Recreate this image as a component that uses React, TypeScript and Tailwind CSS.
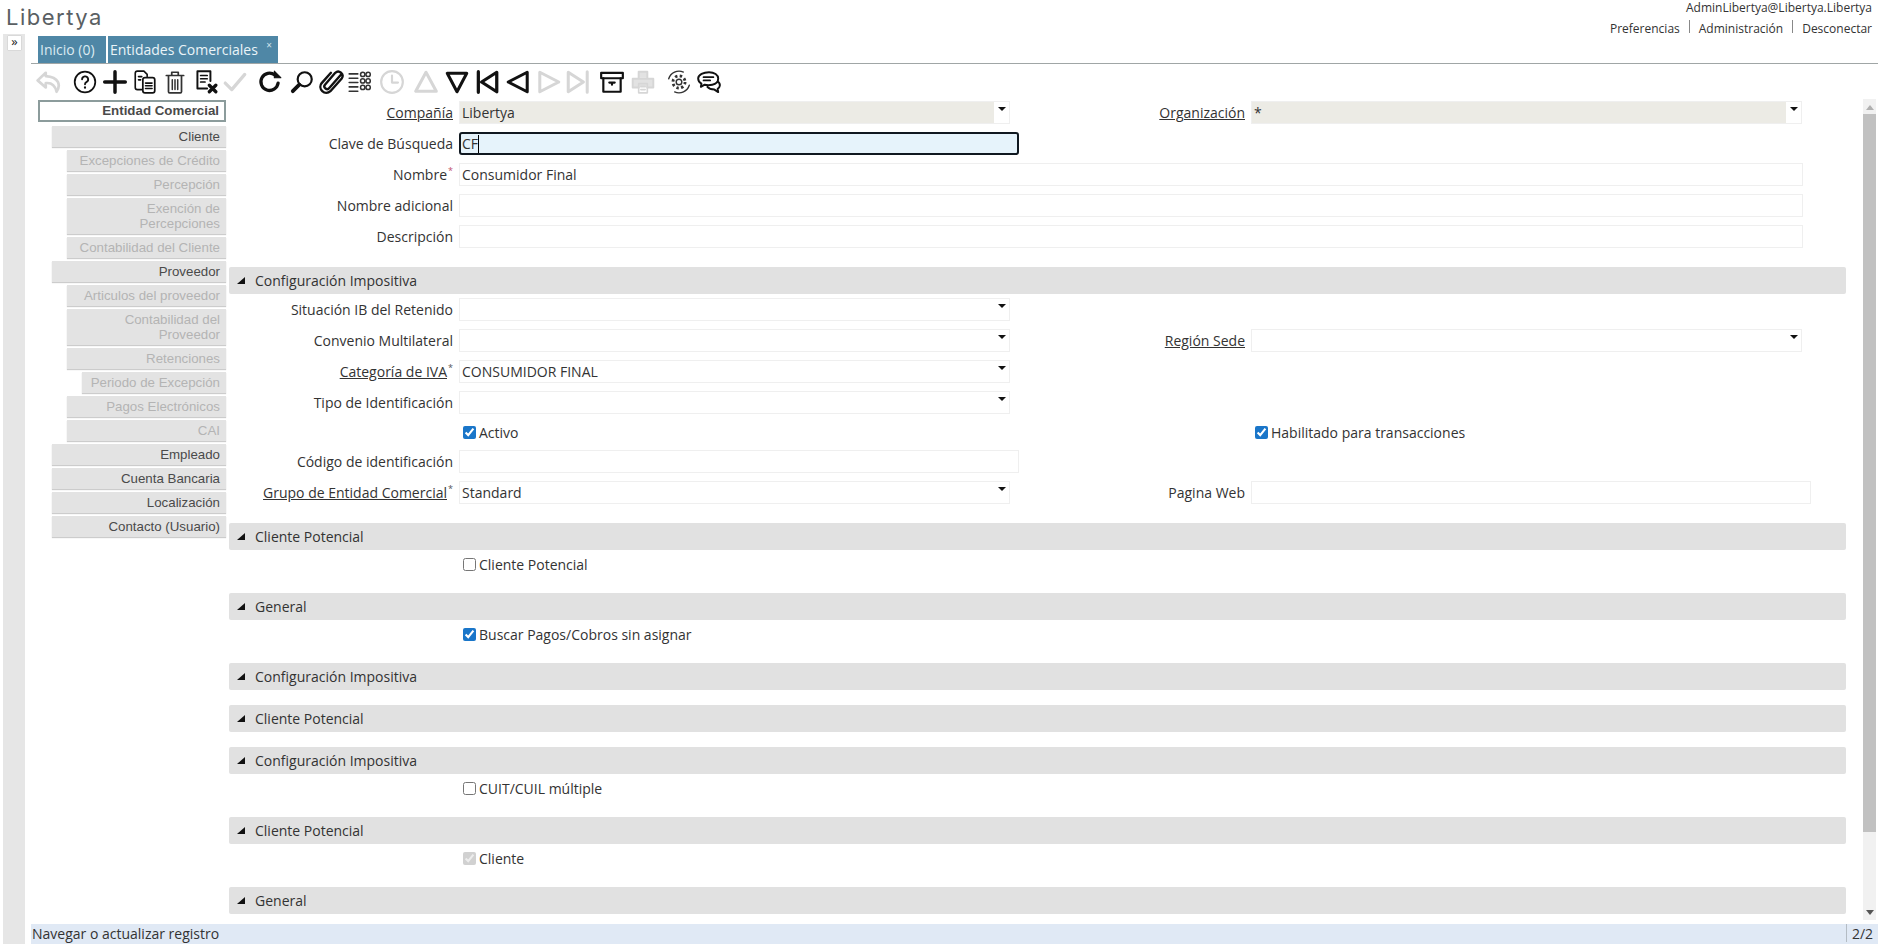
import type { ReactNode } from 'react'

const treeItems = [
  { label: 'Cliente', cls: 'ml-[14px] w-[174px] h-[21px] text-[#4a4a4a]' },
  { label: 'Excepciones de Crédito', cls: 'ml-[29px] w-[159px] h-[21px] text-[#b4b4b4]' },
  { label: 'Percepción', cls: 'ml-[29px] w-[159px] h-[21px] text-[#b4b4b4]' },
  { label: 'Exención de Percepciones', cls: 'ml-[29px] w-[159px] h-[36px] text-[#b4b4b4]' },
  { label: 'Contabilidad del Cliente', cls: 'ml-[29px] w-[159px] h-[21px] text-[#b4b4b4]' },
  { label: 'Proveedor', cls: 'ml-[14px] w-[174px] h-[21px] text-[#4a4a4a]' },
  { label: 'Articulos del proveedor', cls: 'ml-[29px] w-[159px] h-[21px] text-[#b4b4b4]' },
  { label: 'Contabilidad del Proveedor', cls: 'ml-[29px] w-[159px] h-[36px] text-[#b4b4b4]' },
  { label: 'Retenciones', cls: 'ml-[29px] w-[159px] h-[21px] text-[#b4b4b4]' },
  { label: 'Periodo de Excepción', cls: 'ml-[44px] w-[144px] h-[21px] text-[#b4b4b4]' },
  { label: 'Pagos Electrónicos', cls: 'ml-[29px] w-[159px] h-[21px] text-[#b4b4b4]' },
  { label: 'CAI', cls: 'ml-[29px] w-[159px] h-[21px] text-[#b4b4b4]' },
  { label: 'Empleado', cls: 'ml-[14px] w-[174px] h-[21px] text-[#4a4a4a]' },
  { label: 'Cuenta Bancaria', cls: 'ml-[14px] w-[174px] h-[21px] text-[#4a4a4a]' },
  { label: 'Localización', cls: 'ml-[14px] w-[174px] h-[21px] text-[#4a4a4a]' },
  { label: 'Contacto (Usuario)', cls: 'ml-[14px] w-[174px] h-[21px] text-[#4a4a4a]' },
]

function Icon({ className, children, gray }: { className?: string; children: ReactNode; gray?: boolean }) {
  return (
    <button className={`flex w-[30px] shrink-0 items-center justify-center ${className ?? ''}`}>
      <svg
        viewBox="0 0 24 24"
        width="26"
        height="26"
        fill="none"
        stroke={gray ? '#d6d6d6' : '#111'}
        strokeWidth="2"
        strokeLinecap="round"
        strokeLinejoin="round"
      >
        {children}
      </svg>
    </button>
  )
}

function Toolbar() {
  return (
    <div className="flex h-[35px] shrink-0 items-center pl-[3px]">
      <Icon gray>
        <path d="M9 3.500 1.500 10.500 9 17v-4c4.500-.5 8.500 1.500 10 8 4-6 2.500-13.500-10-14.500z" strokeWidth="2.500" />
      </Icon>
      <Icon className="ml-[6px]">
        <circle cx="12" cy="12" r="9.500" strokeWidth="1.600" />
        <path d="M9.300 9.500a2.800 2.800 0 1 1 4 2.600c-.9.5-1.300 1-1.300 2" strokeWidth="1.700" />
        <path d="M12 17v.2" strokeWidth="2" />
      </Icon>
      <Icon>
        <path d="M12 2.500v19M2.500 12h19" strokeWidth="3.200" />
      </Icon>
      <Icon>
        <path d="M9 19H5a2 2 0 0 1-2-2V4a2 2 0 0 1 2-2h6l3 3v2" strokeWidth="1.500" />
        <rect x="10" y="8" width="11" height="14" rx="2" strokeWidth="1.600" />
        <path d="M12.500 13h6M12.500 15.500h6M12.500 18h6M6 7h3M6 10h2" strokeWidth="1.500" />
      </Icon>
      <Icon>
        <g stroke="#333">
          <path d="M4 6h16M9 6V3h6v3" strokeWidth="1.600" />
          <path d="M6 6.500V21a1 1 0 0 0 1 1h10a1 1 0 0 0 1-1V6.500" strokeWidth="1.600" />
          <path d="M9.500 10v9M12 10v9M14.500 10v9" strokeWidth="1.400" />
        </g>
      </Icon>
      <Icon>
        <path d="M14 18H5V2h12v9" strokeWidth="1.800" />
        <path d="M8 6h6M8 9h6M8 12h4" strokeWidth="1.600" />
        <path d="m16 15 6 6M22 15l-6 6" strokeWidth="3" />
      </Icon>
      <Icon gray>
        <path d="m3 13 6 6L21 5" strokeWidth="3" />
      </Icon>
      <Icon className="ml-[5px]">
        <path d="M19.500 13a8 8 0 1 1-3-7.500" strokeWidth="3" />
        <path d="M16 2v6h6z" fill="#111" strokeWidth="1" />
      </Icon>
      <Icon className="ml-[2px]">
        <circle cx="14.500" cy="9.500" r="6.500" strokeWidth="2" />
        <path d="M9.500 14.500 3.500 20.500" strokeWidth="3.500" />
      </Icon>
      <Icon>
        <path
          d="M20 5.500 9.500 17.500a2.500 2.500 0 0 1-4-3L15 3.500a4 4 0 0 1 6 5.200L10.500 20.500a5.500 5.500 0 0 1-8-7.500L11 3.500"
          strokeWidth="2.200"
        />
      </Icon>
      <Icon className="-ml-[2px]">
        <g stroke="#333" strokeWidth="1.400">
          <path d="M2 4.500h8M2 8.500h8M2 12.500h8M2 16.500h8M2 20.500h8" />
          <circle cx="14.500" cy="5" r="2" />
          <circle cx="19.500" cy="5" r="2" />
          <circle cx="14.500" cy="11" r="2" />
          <circle cx="19.500" cy="11" r="2" />
          <circle cx="14.500" cy="17" r="2" />
          <circle cx="19.500" cy="17" r="2" />
        </g>
      </Icon>
      <Icon className="ml-[2px]" gray>
        <circle cx="12" cy="12" r="10" />
        <path d="M12 6v6.500h5.500" />
      </Icon>
      <Icon className="ml-[4px]" gray>
        <path d="M12 3 2.500 20.500h19z" strokeWidth="2.800" />
      </Icon>
      <Icon className="ml-[1px]">
        <path d="M3 4h18l-9 17z" strokeWidth="2.800" />
      </Icon>
      <Icon>
        <path d="M4 2.500v19M21 3 7 12l14 9z" strokeWidth="3" />
      </Icon>
      <Icon className="ml-[1px]">
        <path d="M20.500 3 3 12l17.500 9z" strokeWidth="2.800" />
      </Icon>
      <Icon className="ml-[1px]" gray>
        <path d="M3.500 3 21 12 3.500 21z" strokeWidth="2.800" />
      </Icon>
      <Icon className="-ml-[1px]" gray>
        <path d="M3 3l14 9-14 9zM20.500 2.500v19" strokeWidth="2.800" />
      </Icon>
      <Icon className="ml-[4px]">
        <rect x="2" y="3.500" width="20" height="5" strokeWidth="2" />
        <path d="M4 8.500V21h16V8.500M9.500 12.500h5M12 12.500v2" strokeWidth="2" />
      </Icon>
      <Icon className="ml-[1px]" gray>
        <path d="M8 8V2.500h8V8M8 17H2.500V9h19v8H16" strokeWidth="1.800" fill="#e2e2e2" />
        <path d="M8 13.500h8V22H8zM10 16h4M10 19h4" strokeWidth="1.500" />
      </Icon>
      <Icon className="ml-[6px]">
        <g stroke="#333">
          <path d="M2.500 9A10 10 0 0 1 16 2.800M21.500 15A10 10 0 0 1 8 21.200" strokeWidth="1.300" />
          <circle cx="12" cy="12" r="2.600" strokeWidth="1.300" />
          <circle cx="12" cy="12" r="5.600" strokeWidth="2.600" strokeDasharray="2.200 2.200" strokeLinecap="butt" />
        </g>
      </Icon>
      <Icon>
        <path d="M15 14.500c3.500-.5 5.500-2.800 5.500-5.700C20.500 5.500 17 3 12 3S2 5.300 2 8.800c0 2 1.200 3.700 3 4.700l-.5 3 3.500-2c2 .5 4.800.5 7 0z" strokeWidth="1.800" />
        <path d="M7 7.500h9M7 10.500h6" strokeWidth="1.700" />
        <path d="M20 11.500c1.500 1 2.200 2.300 2 3.800-.2 1.400-1 2.300-2 3l.5 3-3.500-2.300c-2.500 0-5-.7-6.500-2.500" strokeWidth="1.800" />
      </Icon>
    </div>
  )
}

function Label({ text, u, star, red }: { text?: string; u?: boolean; star?: boolean; red?: boolean }) {
  return (
    <div className="flex h-[23px] items-center justify-end whitespace-nowrap">
      <span className={u ? 'underline' : ''}>{text}</span>
      {star && (
        <span className={`relative -top-[4px] ml-[1px] w-[5px] text-[9px] leading-none ${red ? 'text-[#c0506a]' : 'text-[#555]'}`}>
          *
        </span>
      )}
    </div>
  )
}

function Field({ value, cls }: { value?: string; cls: string }) {
  return (
    <div className={`flex h-[23px] items-center border border-[#efefef] bg-white pl-[2px] ${cls}`}>{value}</div>
  )
}

function Select({ value, cls, disabled }: { value?: string; cls: string; disabled?: boolean }) {
  return (
    <div className={`flex h-[23px] border border-[#efefef] ${disabled ? 'bg-[#ecebe5]' : 'bg-white'} ${cls}`}>
      <div className="flex flex-1 items-center pl-[2px]">{value}</div>
      <div className="flex w-[15px] justify-center bg-white pt-[5px]">
        <div className="h-0 w-0 border-x-[4px] border-t-[4px] border-x-transparent border-t-[#111]" />
      </div>
    </div>
  )
}

function Check({ label, checked, disabled }: { label: string; checked?: boolean; disabled?: boolean }) {
  return (
    <label className="flex h-[20px] items-center pl-[4px]">
      <input
        type="checkbox"
        checked={checked}
        disabled={disabled}
        readOnly
        className="m-0 h-[13px] w-[13px] accent-[#1a76c9]"
      />
      <span className="ml-[3px]">{label}</span>
    </label>
  )
}

function Header({ title, cls }: { title: string; cls: string }) {
  return (
    <div className={`flex h-[27px] items-center rounded-[2px] bg-[#e1e1e1] ${cls}`}>
      <div className="ml-[8px] mr-[10px] h-0 w-0 border-b-[7px] border-l-[8px] border-b-[#111] border-l-transparent" />
      <span>{title}</span>
    </div>
  )
}

function Form() {
  return (
    <div className="ml-[3px] w-[1617px] shrink-0 overflow-hidden pt-[2px]">
      <div className="grid grid-cols-[224px_561px_219px_560px] gap-x-[6px] gap-y-[8px]">
        <Label text="Compañía" u />
        <Select value="Libertya" cls="w-[551px]" disabled />
        <Label text="Organización" u />
        <Select value="*" cls="w-[551px]" disabled />

        <Label text="Clave de Búsqueda" />
        <div className="col-span-3 flex h-[23px] w-[560px] items-center rounded-[3px] border-2 border-[#101820] bg-[#e6f3fb] pl-[1px]">
          CF<span className="h-[18px] w-px bg-black" />
        </div>

        <Label text="Nombre" star red />
        <Field value="Consumidor Final" cls="col-span-3 w-[1344px]" />
        <Label text="Nombre adicional" />
        <Field cls="col-span-3 w-[1344px]" />
        <Label text="Descripción" />
        <Field cls="col-span-3 w-[1344px]" />
      </div>

      <Header title="Configuración Impositiva" cls="mt-[19px]" />

      <div className="mt-[4px] grid grid-cols-[224px_561px_219px_560px] gap-x-[6px] gap-y-[8px]">
        <Label text="Situación IB del Retenido" />
        <Select cls="col-span-3 w-[551px]" />

        <Label text="Convenio Multilateral" />
        <Select cls="w-[551px]" />
        <Label text="Región Sede" u />
        <Select cls="w-[551px]" />

        <Label text="Categoría de IVA" u star />
        <Select value="CONSUMIDOR FINAL" cls="col-span-3 w-[551px]" />

        <Label text="Tipo de Identificación" />
        <Select cls="col-span-3 w-[551px]" />

        <div />
        <Check label="Activo" checked />
        <div />
        <Check label="Habilitado para transacciones" checked />

        <Label text="Código de identificación" />
        <Field cls="col-span-3 w-[560px]" />

        <Label text="Grupo de Entidad Comercial" u star />
        <Select value="Standard" cls="w-[551px]" />
        <Label text="Pagina Web" />
        <Field cls="w-[560px]" />
      </div>

      <Header title="Cliente Potencial" cls="mt-[19px]" />
      <div className="ml-[230px] mt-[4px]">
        <Check label="Cliente Potencial" />
      </div>

      <Header title="General" cls="mt-[19px]" />
      <div className="ml-[230px] mt-[4px]">
        <Check label="Buscar Pagos/Cobros sin asignar" checked />
      </div>

      <Header title="Configuración Impositiva" cls="mt-[19px]" />
      <Header title="Cliente Potencial" cls="mt-[15px]" />
      <Header title="Configuración Impositiva" cls="mt-[15px]" />
      <div className="ml-[230px] mt-[4px]">
        <Check label="CUIT/CUIL múltiple" />
      </div>

      <Header title="Cliente Potencial" cls="mt-[19px]" />
      <div className="ml-[230px] mt-[4px]">
        <Check label="Cliente" checked disabled />
      </div>

      <Header title="General" cls="mt-[19px]" />
    </div>
  )
}

export default function App() {
  return (
    <div className="flex h-[944px] w-[1878px] flex-col overflow-hidden bg-white font-['Open_Sans',sans-serif] text-[14px] text-[#333]">
      <div className="flex h-[34px] shrink-0 justify-between">
        <div className="pl-[6px] pt-[2px] font-['Inter',sans-serif] text-[22px] leading-[30px] tracking-[1.5px] text-[#5a5f63]">
          Libertya
        </div>
        <div className="pr-[6px] text-right text-[12px]">
          <div className="h-[17px] leading-[16.4px]">AdminLibertya@Libertya.Libertya</div>
          <div className="mt-[3px] flex justify-end leading-[17px]">
            <span>Preferencias</span>
            <span className="mx-[9px] h-[13px] w-px bg-[#888]" />
            <span>Administración</span>
            <span className="mx-[9px] h-[13px] w-px bg-[#888]" />
            <span>Desconectar</span>
          </div>
        </div>
      </div>

      <div className="flex min-h-0 flex-1">
        <div className="ml-[3px] w-[22px] shrink-0 bg-[#e6e6e6] pl-[5px] pt-[2px]">
          <button className="flex h-[14px] w-[13px] items-center justify-center bg-white pb-[3px] text-[13px] leading-none text-[#222] shadow-[0_0_1px_#999]">
            »
          </button>
        </div>

        <div className="ml-[6px] flex min-w-0 flex-1 flex-col">
          <div className="flex h-[30px] shrink-0 items-end gap-[2px] border-b border-[#a0a6a6] pl-[7px]">
            <div className="flex h-[27px] w-[68px] items-center bg-[#4f87a6] pl-[2px] text-[#dcebf2]">Inicio (0)</div>
            <div className="relative flex h-[27px] w-[170px] items-center bg-[#4f87a6] pl-[2px] text-[#eaf4f8]">
              <span>Entidades Comerciales</span>
              <span className="absolute right-[6px] top-[4px] text-[10px] leading-none text-[#cfe3ec]">×</span>
            </div>
          </div>

          <Toolbar />

          <div className="flex min-h-0 flex-1">
            <div className="ml-[7px] w-[188px] shrink-0 pt-[1px] font-['Liberation_Sans',sans-serif] text-[13.3px]">
              <div className="flex h-[22px] items-center justify-end border-2 border-[#8c9c9c] bg-white pr-[5px] font-bold text-[#4a4a4a]">
                Entidad Comercial
              </div>
              <div className="mt-[4px] flex flex-col gap-[3px]">
                {treeItems.map((it) => (
                  <div
                    key={it.label}
                    className={`flex items-center justify-end bg-[#e3e3e3] pl-[6px] pr-[6px] text-right leading-[15px] shadow-[0_1px_1px_#ccc] ${it.cls}`}
                  >
                    {it.label}
                  </div>
                ))}
              </div>
            </div>

            <Form />

            <div className="ml-[17px] flex h-[821px] w-[13px] shrink-0 flex-col items-center bg-[#f1f1f1]">
              <div className="mt-[6px] h-0 w-0 border-x-[4px] border-b-[5px] border-x-transparent border-b-[#b0b0b0]" />
              <div className="mt-[4px] h-[718px] w-full bg-[#c1c1c1]" />
              <div className="mt-auto mb-[5px] h-0 w-0 border-x-[4px] border-t-[5px] border-x-transparent border-t-[#555]" />
            </div>
          </div>

          <div className="flex h-[20px] shrink-0 items-center bg-[#e0e9f5] pb-[2px] pl-[1px]">
            <span className="flex-1">Navegar o actualizar registro</span>
            <span className="flex h-full w-[32px] items-center justify-center border-l border-[#b4bcc4]">2/2</span>
          </div>
        </div>
      </div>
    </div>
  )
}
